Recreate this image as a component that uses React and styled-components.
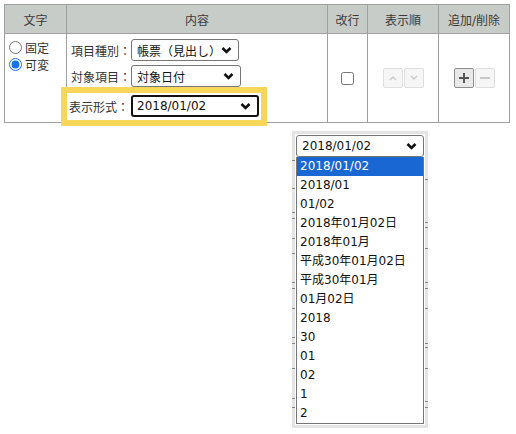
import React from 'react'
import styled, { createGlobalStyle } from 'styled-components'

const GlobalStyle = createGlobalStyle`
	body {
		margin: 0;
		background: #fff;
		font-family: 'DejaVu Sans', 'Noto Sans CJK JP', sans-serif;
		font-size: 12px;
		color: #333;
	}
`

const Page = styled.div`
	position: relative;
	width: 516px;
	height: 434px;
	padding: 4px;
	box-sizing: border-box;
`

const Grid = styled.table`
	width: 506px;
	table-layout: fixed;
	border-collapse: collapse;
`

const Head = styled.th`
	height: 28px;
	padding: 0;
	background: #c8ccc8;
	border: 1px solid #a0a0a0;
	font-weight: normal;
	color: #3a3a3a;
	text-align: center;
	white-space: nowrap;
`

const Cell = styled.td`
	padding: ${(p) => p.$pad || '0'};
	border: 1px solid #a0a0a0;
	vertical-align: ${(p) => (p.$top ? 'top' : 'middle')};
	text-align: ${(p) => (p.$center ? 'center' : 'left')};
`

const RadioRow = styled.label`
	display: flex;
	align-items: center;
	height: 17px;
	white-space: nowrap;

	input {
		width: 13px;
		height: 13px;
		margin: 0 3px 0 0;
		accent-color: #1a73e8;
	}
`

const Fields = styled.div`
	display: flex;
	flex-direction: column;
	gap: 4px;
`

const Field = styled.div`
	display: flex;
	align-items: center;
	height: 22px;
`

const Highlight = styled.div`
	position: relative;
	display: flex;
	align-items: center;
	width: 192px;
	margin: -4px 0 -4px -10px;
	padding: 2px 0 3px 2px;
	border: 6px solid #f8d65a;
	background: #fff;
`

const Label = styled.span`
	flex: none;
	width: ${(p) => p.$w}px;
	white-space: nowrap;
	color: #333;
`

const Select = styled.div`
	flex: none;
	display: flex;
	align-items: center;
	justify-content: space-between;
	box-sizing: border-box;
	width: ${(p) => p.$w}px;
	height: 22px;
	padding: 0 6px 0 ${(p) => (p.$focus ? '4px' : '5px')};
	border: ${(p) => (p.$focus ? '2px solid #111' : '1px solid #767676')};
	border-radius: 3px;
	background: #fff;
	color: #111;
	white-space: nowrap;
`

const Check = styled.input`
	width: 13px;
	height: 13px;
	margin: 0;
	vertical-align: middle;
`

const BtnGroup = styled.div`
	display: inline-flex;
	gap: 1px;
	vertical-align: middle;
`

const IconBtn = styled.button`
	display: flex;
	align-items: center;
	justify-content: center;
	width: 20px;
	height: 20px;
	padding: 0;
	border: 1px solid ${(p) => (p.disabled ? '#dedede' : '#8e8e8e')};
	border-radius: 2px;
	background: ${(p) => (p.disabled ? '#f6f6f6' : '#e9e9e9')};
	color: ${(p) => (p.disabled ? '#c8c8c8' : '#555')};
`

const Popup = styled.div`
	position: absolute;
	left: 292px;
	top: 131px;
	padding: 1px;
	border: 3px solid #e4e4e4;
	background: #fff;
`

const Tick = styled.span`
	position: absolute;
	left: ${(p) => (p.$right ? '130px' : '-3px')};
	width: 3px;
	height: 1px;
	background: #8a8a8a;
`

const List = styled.ul`
	margin: 0;
	padding: 0;
	list-style: none;
	width: 128px;
	box-sizing: border-box;
	border: 1px solid #767676;
	border-top: none;
`

const Option = styled.li`
	height: 19px;
	line-height: 19px;
	padding-left: 3px;
	background: ${(p) => (p.$active ? '#1967d2' : '#fff')};
	color: ${(p) => (p.$active ? '#fff' : '#111')};
	white-space: nowrap;
`

const Chevron = () => (
	<svg width="11" height="8" viewBox="0 0 11 8">
		<polyline points="1.5,2 5.5,6 9.5,2" fill="none" stroke="#111" strokeWidth="2.6" />
	</svg>
)

const Arrow = ({ up }) => (
	<svg width="8" height="6" viewBox="0 0 8 6">
		<polyline
			points={up ? '1,5 4,2 7,5' : '1,1 4,4 7,1'}
			fill="none"
			stroke="currentColor"
			strokeWidth="1.3"
		/>
	</svg>
)

const Sign = ({ plus }) => (
	<svg width="10" height="10" viewBox="0 0 10 10">
		<rect x="0" y="4" width="10" height="2" fill="currentColor" />
		{plus && <rect x="4" y="0" width="2" height="10" fill="currentColor" />}
	</svg>
)

const formats = [
	'2018/01/02',
	'2018/01',
	'01/02',
	'2018年01月02日',
	'2018年01月',
	'平成30年01月02日',
	'平成30年01月',
	'01月02日',
	'2018',
	'30',
	'01',
	'02',
	'1',
	'2',
]

// stray marks along the frame of the open list, page y positions
const leftTicks = [160, 188, 212, 218, 238, 253, 282, 288, 308, 337, 343, 368, 398, 407]
const rightTicks = [179, 222, 227, 248, 282, 288, 308, 343, 347, 368, 401, 407]

function App() {
	return (
		<Page>
			<GlobalStyle />
			<Grid>
				<colgroup>
					<col style={{ width: 62 }} />
					<col style={{ width: 261 }} />
					<col style={{ width: 40 }} />
					<col style={{ width: 71 }} />
					<col style={{ width: 71 }} />
				</colgroup>
				<thead>
					<tr>
						<Head>文字</Head>
						<Head>内容</Head>
						<Head>改行</Head>
						<Head>表示順</Head>
						<Head>追加/削除</Head>
					</tr>
				</thead>
				<tbody>
					<tr>
						<Cell $top $pad="5px 0 0 4px">
							<RadioRow>
								<input type="radio" name="moji" />
								固定
							</RadioRow>
							<RadioRow>
								<input type="radio" name="moji" defaultChecked />
								可変
							</RadioRow>
						</Cell>
						<Cell $top $pad="5px 4px 0 4px">
							<Fields>
								<Field>
									<Label $w={60}>項目種別：</Label>
									<Select $w={108}>
										帳票（見出し）
										<Chevron />
									</Select>
								</Field>
								<Field>
									<Label $w={60}>対象項目：</Label>
									<Select $w={110}>
										対象日付
										<Chevron />
									</Select>
								</Field>
								<Highlight>
									<Label $w={62}>表示形式：</Label>
									<Select $w={128} $focus>
										2018/01/02
										<Chevron />
									</Select>
								</Highlight>
							</Fields>
						</Cell>
						<Cell $center>
							<Check type="checkbox" />
						</Cell>
						<Cell $center>
							<BtnGroup>
								<IconBtn disabled>
									<Arrow up />
								</IconBtn>
								<IconBtn disabled>
									<Arrow />
								</IconBtn>
							</BtnGroup>
						</Cell>
						<Cell $center>
							<BtnGroup>
								<IconBtn>
									<Sign plus />
								</IconBtn>
								<IconBtn disabled>
									<Sign />
								</IconBtn>
							</BtnGroup>
						</Cell>
					</tr>
				</tbody>
			</Grid>
			<Popup>
				<Select $w={128}>
					2018/01/02
					<Chevron />
				</Select>
				<List>
					{formats.map((f, i) => (
						<Option key={f} $active={i === 0}>
							{f}
						</Option>
					))}
				</List>
				{leftTicks.map((y) => (
					<Tick key={'l' + y} style={{ top: y - 134 }} />
				))}
				{rightTicks.map((y) => (
					<Tick key={'r' + y} $right style={{ top: y - 134 }} />
				))}
			</Popup>
		</Page>
	)
}

export default App
